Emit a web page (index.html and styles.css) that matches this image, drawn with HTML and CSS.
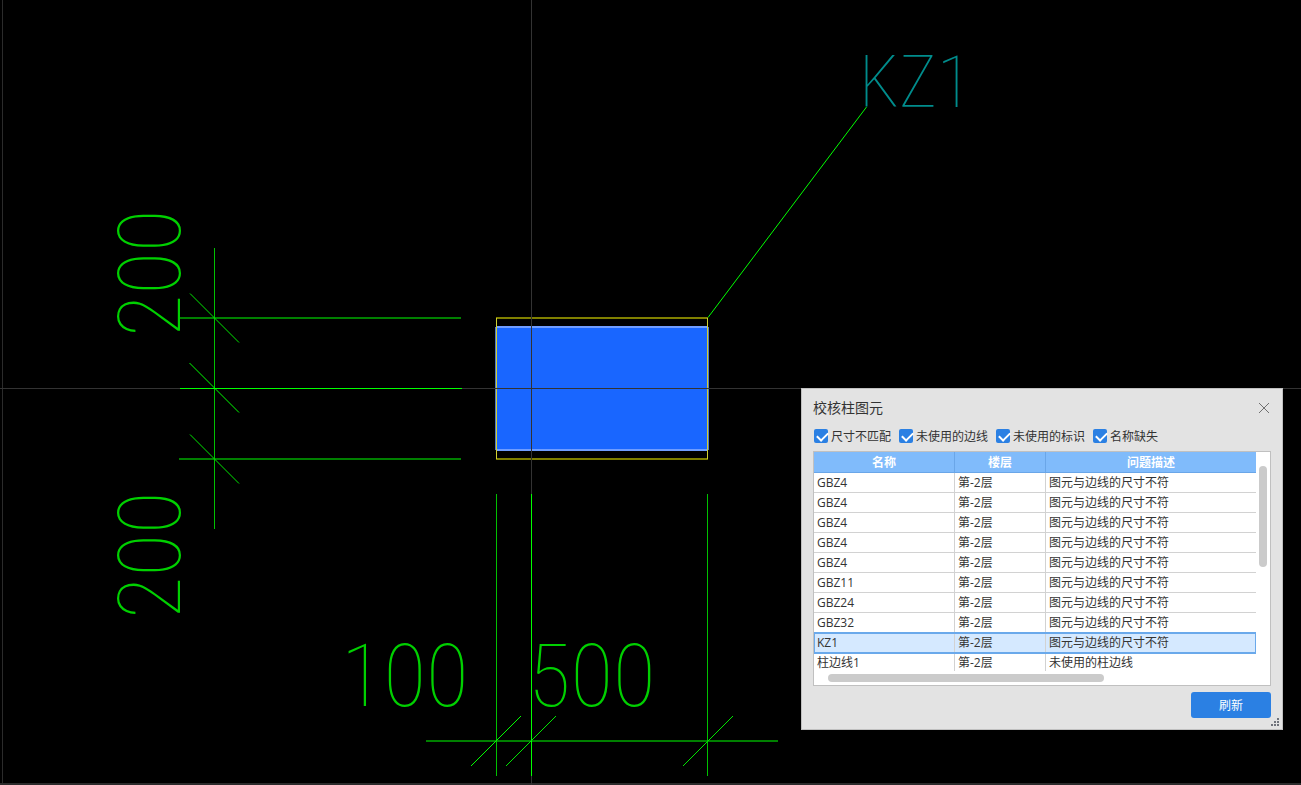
FILE: index.html
```
<!DOCTYPE html>
<html lang="zh-CN">
<head>
<meta charset="utf-8">
<title>校核柱图元</title>
<link rel="stylesheet" href="styles.css">
</head>
<body>
<main class="workspace">
<svg class="drawing" role="img" aria-label="KZ1">
  <g class="frame">
    <rect x="2" y="0" width="1" height="100%"/>
    <rect x="0" y="783" width="100%" height="2"/>
  </g>

  <g class="column">
    <rect class="outline-h" x="496" y="317" width="212" height="2"/>
    <rect class="outline-h" x="496" y="458" width="212" height="2"/>
    <rect class="column-side" x="495" y="327" width="214" height="123"/>
    <rect class="column-edge" x="496" y="326" width="212" height="125"/>
    <rect class="column-fill" x="497" y="328" width="210" height="121"/>
    <rect class="outline-v" x="496" y="318" width="1" height="141"/>
    <rect class="outline-v" x="707" y="318" width="1" height="141"/>
  </g>

  <g class="axis">
    <rect x="0" y="388" width="100%" height="1"/>
    <rect x="531" y="0" width="1" height="100%"/>
  </g>

  <g class="dim-soft">
    <rect x="179" y="317" width="282" height="2"/>
    <rect x="179" y="458" width="282" height="2"/>
    <rect x="426" y="740" width="352" height="2"/>
  </g>
  <g class="dim">
    <rect x="214" y="248" width="1" height="281"/>
    <rect x="496" y="494" width="1" height="282"/>
    <rect x="707" y="494" width="1" height="282"/>
  </g>
  <g class="dim-bright">
    <rect x="180" y="388" width="282" height="1"/>
    <rect x="531" y="494" width="1" height="282"/>
  </g>
  <g class="tick">
    <path d="M190 293.500L239 342.500M190 434.500L239 483.500M506 766L556 716M683 766L733 716"/>
    <path class="tick-bright" d="M189.500 363L239 412.500M471 766L521 716M866.500 107L708 317.500"/>
  </g>

  <text class="dim-text" transform="translate(180 337) rotate(-90)">200</text>
  <text class="dim-text" transform="translate(180 619) rotate(-90)">200</text>
  <text class="dim-text" x="341" y="706">100</text>
  <text class="dim-text" x="528" y="706">500</text>
  <text class="tag-text" x="859" y="107">KZ1</text>
</svg>

<section class="dialog" role="dialog" aria-labelledby="dialog-title">
  <header class="dialog-head">
    <h1 class="dialog-title" id="dialog-title">校核柱图元</h1>
    <button class="close" type="button" aria-label="关闭">
      <svg width="12" height="12" viewBox="0 0 12 12"><path d="M1 1L11 11M11 1L1 11"/></svg>
    </button>
  </header>
  <div class="filters">
    <label class="filter"><input class="check" type="checkbox" checked>尺寸不匹配</label>
    <label class="filter"><input class="check" type="checkbox" checked>未使用的边线</label>
    <label class="filter"><input class="check" type="checkbox" checked>未使用的标识</label>
    <label class="filter"><input class="check" type="checkbox" checked>名称缺失</label>
  </div>
  <div class="list">
    <div class="list-view">
      <table class="issues">
        <colgroup><col class="col-name"><col class="col-floor"><col></colgroup>
        <thead><tr><th>名称</th><th>楼层</th><th>问题描述</th></tr></thead>
        <tbody>
          <tr><td>GBZ4</td><td>第-2层</td><td>图元与边线的尺寸不符</td></tr>
          <tr><td>GBZ4</td><td>第-2层</td><td>图元与边线的尺寸不符</td></tr>
          <tr><td>GBZ4</td><td>第-2层</td><td>图元与边线的尺寸不符</td></tr>
          <tr><td>GBZ4</td><td>第-2层</td><td>图元与边线的尺寸不符</td></tr>
          <tr><td>GBZ4</td><td>第-2层</td><td>图元与边线的尺寸不符</td></tr>
          <tr><td>GBZ11</td><td>第-2层</td><td>图元与边线的尺寸不符</td></tr>
          <tr><td>GBZ24</td><td>第-2层</td><td>图元与边线的尺寸不符</td></tr>
          <tr><td>GBZ32</td><td>第-2层</td><td>图元与边线的尺寸不符</td></tr>
          <tr class="selected"><td>KZ1</td><td>第-2层</td><td>图元与边线的尺寸不符</td></tr>
          <tr><td>柱边线1</td><td>第-2层</td><td>未使用的柱边线</td></tr>
        </tbody>
      </table>
    </div>
    <div class="vbar"><div class="vthumb"></div></div>
    <div class="hbar"><div class="hthumb"></div></div>
  </div>
  <footer class="dialog-foot"><button class="refresh" type="button">刷新</button></footer>
  <svg class="grip" width="8" height="8" viewBox="0 0 8 8" aria-hidden="true"><path d="M6 0h2v2h-2zM3 3h2v2h-2zM6 3h2v2h-2zM0 6h2v2h-2zM3 6h2v2h-2zM6 6h2v2h-2z"/></svg>
</section>
</main>
</body>
</html>
```
FILE: styles.css
```
* { box-sizing: border-box; }

body {
  margin: 0;
  background: #000;
  color: #333;
  font: 12px/20px "Open Sans", "Noto Sans CJK SC", sans-serif;
}

.workspace {
  position: relative;
  height: 100vh;
  overflow: hidden;
}

.drawing {
  display: block;
  width: 100%;
  height: 100%;
}

.frame { fill: #2b2b2b; }
.axis { fill: #333; }
.column-side { fill: #5577c4; }
.column-edge { fill: #6f9dff; }
.column-fill { fill: #1966ff; }
.outline-h { fill: #808000; }
.outline-v { fill: #d0d030; }
.dim-soft { fill: #008000; }
.dim { fill: #00c000; }
.dim-bright { fill: #00ff00; }
.tick { fill: none; stroke: #00e800; }
.tick-bright { stroke: #00ff00; }

.dim-text,
.tag-text {
  font-family: "Roboto Condensed", "Roboto", sans-serif;
  font-weight: 100;
  fill: #00d000;
  font-size: 88px;
}

.tag-text {
  fill: #008c8c;
  font-size: 72px;
}

.dialog {
  position: absolute;
  left: 801px;
  top: 388px;
  width: 482px;
  padding: 8px 11px 11px;
  border: 1px solid #c0c0c0;
  background: #e3e3e3;
}

.dialog-head {
  display: flex;
  align-items: center;
  justify-content: space-between;
  height: 22px;
}

.dialog-title {
  margin: 0;
  font-size: 14px;
  font-weight: 400;
}

.close {
  display: flex;
  padding: 0;
  border: 0;
  margin-right: 1px;
  background: none;
}

.close path { fill: none; stroke: #707070; }

.filters {
  display: flex;
  gap: 8px;
  padding: 8px 1px 3px;
}

.filter {
  display: flex;
  align-items: center;
  gap: 3px;
  height: 20px;
}

.check {
  appearance: none;
  width: 14px;
  height: 14px;
  margin: 0 0 2px;
  border-radius: 2px;
  background: #2b80e3;
}

.check:checked::before {
  content: "";
  display: block;
  width: 9px;
  height: 5px;
  margin: 3px 0 0 3px;
  border: solid #fff;
  border-width: 0 0 2px 2px;
  transform: rotate(-45deg);
}

.check:checked { display: flex; align-items: flex-start; }

.list {
  display: grid;
  grid-template-columns: 1fr 14px;
  grid-template-rows: 219px 14px;
  margin-top: 1px;
  border: 1px solid #c0c0c0;
  background: #fff;
}

.list-view { overflow: hidden; }

.issues {
  width: 100%;
  border-collapse: separate;
  border-spacing: 0;
  table-layout: fixed;
}

.col-name { width: 141px; }
.col-floor { width: 91px; }

.issues th {
  height: 21px;
  padding: 2px 0 0;
  border-right: 1px solid #6aa6e8;
  border-bottom: 1px solid #6aa6e8;
  background: #80bbfb;
  color: #fff;
  line-height: 18px;
}

.issues td {
  height: 20px;
  padding: 0 3px;
  border-right: 1px solid #d2d2d2;
  border-bottom: 1px solid #d2d2d2;
  line-height: 19px;
  white-space: nowrap;
}

.issues th:last-child,
.issues td:last-child { border-right: 0; }

.selected { outline: 2px solid #6aa9eb; outline-offset: -1px; }
.selected td { background: #d5e9ff; }

.vbar { padding: 14px 3px 0; }
.vthumb { height: 101px; border-radius: 4px; background: #cbcbcb; }
.hbar { padding: 3px 0 0 14px; }
.hthumb { width: 276px; height: 8px; border-radius: 4px; background: #cbcbcb; }

.dialog-foot {
  display: flex;
  justify-content: flex-end;
  padding-top: 6px;
}

.refresh {
  width: 80px;
  height: 26px;
  padding: 2px 0 0;
  border: 0;
  border-radius: 3px;
  background: #2b80e3;
  color: #fff;
  font: inherit;
}

.grip {
  position: absolute;
  right: 3px;
  bottom: 3px;
  fill: #70747c;
}
```
